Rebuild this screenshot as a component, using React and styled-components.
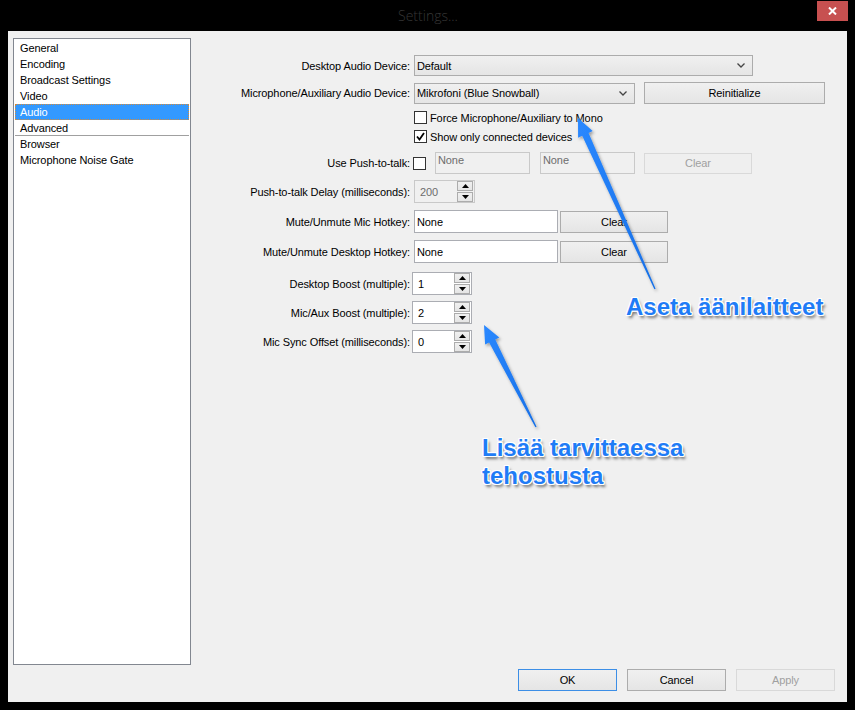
import React from "react";
import styled, { createGlobalStyle } from "styled-components";

const GlobalStyle = createGlobalStyle`
  html, body {
    margin: 0;
    padding: 0;
    background: #000;
  }
  body {
    font-family: "Liberation Sans", Arial, sans-serif;
    font-size: 11px;
    letter-spacing: -0.1px;
    color: #000;
  }
`;

const Window = styled.div`
  position: relative;
  width: 855px;
  height: 710px;
  background: #000;
  display: flex;
  flex-direction: column;
  overflow: hidden;
`;

const TitleBar = styled.div`
  height: 31px;
  flex: none;
  display: grid;
  grid-template-columns: 1fr auto 1fr;
  padding: 0 7px 0 8px;
  box-sizing: border-box;
`;

const Title = styled.div`
  grid-column: 2;
  align-self: center;
  margin-top: -1px;
  font-family: "Open Sans", sans-serif;
  font-weight: 300;
  font-size: 14px;
  letter-spacing: 0;
  color: #363636;
`;

const CloseButton = styled.div`
  justify-self: end;
  width: 31px;
  height: 20px;
  margin-top: 1px;
  background: #c75050;
  display: flex;
  align-items: center;
  justify-content: center;
`;

const Body = styled.div`
  flex: 1;
  margin: 0 8px 8px;
  background: #f0f0f0;
  display: flex;
  flex-direction: column;
`;

const Top = styled.div`
  flex: 1;
  display: flex;
  min-height: 0;
`;

const Sidebar = styled.ul`
  margin: 7px 0 0 5px;
  padding: 1px;
  width: 178px;
  box-sizing: border-box;
  border: 1px solid #828790;
  background: #fff;
  list-style: none;
`;

const Item = styled.li`
  height: 16px;
  line-height: 14px;
  padding-left: 4px;
  box-sizing: border-box;
  border: 1px dotted ${(p) => (p.$active ? "#d48b3c" : "transparent")};
  background: ${(p) => (p.$active ? "#3399ff" : "transparent")};
  color: ${(p) => (p.$active ? "#fff" : "#000")};
  white-space: nowrap;
`;

const Separator = styled.li`
  height: 1px;
  margin-top: -1px;
  background: #a0a0a0;
`;

const Form = styled.div`
  flex: 1;
  display: flex;
  flex-direction: column;
`;

const Row = styled.div`
  display: flex;
  align-items: center;
  height: ${(p) => p.$h}px;
  margin-top: ${(p) => p.$mt}px;
`;

const Label = styled.div`
  width: 219px;
  flex: none;
  text-align: right;
  white-space: nowrap;
`;

const Controls = styled.div`
  display: flex;
  align-items: center;
  margin-left: ${(p) => p.$ml ?? 4}px;
`;

const Combo = styled.div`
  width: ${(p) => p.$w}px;
  height: 21px;
  box-sizing: border-box;
  border: 1px solid #acacac;
  background: linear-gradient(#f0f0f0, #e5e5e5);
  display: flex;
  align-items: center;
  justify-content: space-between;
  padding: 0 7px 0 2px;
`;

const Button = styled.div`
  width: ${(p) => p.$w}px;
  height: ${(p) => p.$h ?? 22}px;
  margin-left: ${(p) => p.$ml ?? 0}px;
  box-sizing: border-box;
  border: 1px solid
    ${(p) => (p.$focus ? "#3c8ee6" : p.$disabled ? "#d9d9d9" : "#acacac")};
  background: ${(p) =>
    p.$disabled ? "#efefef" : "linear-gradient(#f0f0f0, #e5e5e5)"};
  color: ${(p) => (p.$disabled ? "#a0a0a0" : "#000")};
  display: flex;
  align-items: center;
  justify-content: center;
`;

const Box = styled.div`
  width: 13px;
  height: 13px;
  box-sizing: border-box;
  border: 1px solid #333;
  background: #fff;
  display: flex;
  align-items: center;
  justify-content: center;
  flex: none;
`;

const CheckText = styled.span`
  margin-left: 3px;
  white-space: nowrap;
`;

const TextInput = styled.div`
  width: ${(p) => p.$w}px;
  height: ${(p) => p.$h ?? 23}px;
  margin-left: ${(p) => p.$ml ?? 0}px;
  box-sizing: border-box;
  padding: 1px 2px;
  border: 1px solid ${(p) => (p.$disabled ? "#c9c9c9" : "#abadb3")};
  background: ${(p) => (p.$disabled ? "#f0f0f0" : "#fff")};
  color: ${(p) => (p.$disabled ? "#6d6d6d" : "#000")};
  display: flex;
  align-items: ${(p) => (p.$disabled ? "flex-start" : "center")};
`;

const Spin = styled.div`
  width: ${(p) => p.$w}px;
  height: 23px;
  box-sizing: border-box;
  border: 1px solid ${(p) => (p.$disabled ? "#c9c9c9" : "#abadb3")};
  background: ${(p) => (p.$disabled ? "#f0f0f0" : "#fff")};
  color: ${(p) => (p.$disabled ? "#6d6d6d" : "#000")};
  display: flex;
  align-items: center;
  justify-content: space-between;
  padding: 0 0 0 5px;
`;

const SpinButtons = styled.div`
  display: flex;
  flex-direction: column;
  gap: 1px;
  padding: 1px;
`;

const SpinButton = styled.div`
  width: 16px;
  height: 10px;
  box-sizing: border-box;
  border: 1px solid #acacac;
  background: linear-gradient(#f0f0f0, #e5e5e5);
  display: flex;
  align-items: center;
  justify-content: center;
`;

const Footer = styled.div`
  height: 37px;
  flex: none;
  box-sizing: border-box;
  display: flex;
  justify-content: flex-end;
  gap: 10px;
  padding: 4px 12px 0 0;
`;

const Callout = styled.div`
  position: absolute;
  left: ${(p) => p.$x}px;
  top: ${(p) => p.$y}px;
  font-family: "Liberation Sans", Arial, sans-serif;
  font-weight: bold;
  font-size: 24px;
  line-height: 28px;
  letter-spacing: 0;
  color: #1f7cf6;
  white-space: nowrap;
  text-shadow: -1px -1px 0 #fff, 1px -1px 0 #fff, -1px 1px 0 #fff,
    1px 1px 0 #fff, 0 -1px 0 #fff, 0 1px 0 #fff, -1px 0 0 #fff, 1px 0 0 #fff,
    2px 3px 3px rgba(0, 0, 0, 0.55);
`;

const Arrows = styled.svg`
  position: absolute;
  left: 0;
  top: 0;
  pointer-events: none;
`;

const Chevron = () => (
  <svg width="8" height="5" viewBox="0 0 8 5">
    <polyline points="0.5,0.5 4,4 7.5,0.5" fill="none" stroke="#444" strokeWidth="1.3" />
  </svg>
);

const Tri = ({ up }) => (
  <svg width="7" height="4" viewBox="0 0 7 4">
    <polygon points={up ? "0,4 7,4 3.5,0" : "0,0 7,0 3.5,4"} fill="#000" />
  </svg>
);

const Check = ({ checked, text }) => (
  <>
    <Box>
      {checked && (
        <svg width="9" height="9" viewBox="0 0 9 9">
          <polyline points="1,4.5 3.5,7.5 8,1" fill="none" stroke="#000" strokeWidth="1.8" />
        </svg>
      )}
    </Box>
    {text && <CheckText>{text}</CheckText>}
  </>
);

const SpinBox = ({ value, w = 60, disabled }) => (
  <Spin $w={w} $disabled={disabled}>
    <span>{value}</span>
    <SpinButtons>
      <SpinButton>
        <Tri up />
      </SpinButton>
      <SpinButton>
        <Tri />
      </SpinButton>
    </SpinButtons>
  </Spin>
);

const sections = ["General", "Encoding", "Broadcast Settings", "Video", "Audio", "Advanced"];
const plugins = ["Browser", "Microphone Noise Gate"];

export default function App() {
  return (
    <Window>
      <GlobalStyle />
      <TitleBar>
        <Title>Settings...</Title>
        <CloseButton>
          <svg width="9" height="8" viewBox="0 0 9 8">
            <path d="M1 0.5 L8 7.5 M8 0.5 L1 7.5" stroke="#fff" strokeWidth="2" />
          </svg>
        </CloseButton>
      </TitleBar>
      <Body>
        <Top>
          <Sidebar>
            {sections.map((s) => (
              <Item key={s} $active={s === "Audio"}>
                {s}
              </Item>
            ))}
            <Separator />
            {plugins.map((s) => (
              <Item key={s}>{s}</Item>
            ))}
          </Sidebar>
          <Form>
            <Row $h={21} $mt={24}>
              <Label>Desktop Audio Device:</Label>
              <Controls>
                <Combo $w={339}>
                  <span>Default</span>
                  <Chevron />
                </Combo>
              </Controls>
            </Row>
            <Row $h={22} $mt={6}>
              <Label>Microphone/Auxiliary Audio Device:</Label>
              <Controls>
                <Combo $w={221}>
                  <span>Mikrofoni (Blue Snowball)</span>
                  <Chevron />
                </Combo>
                <Button $w={181} $ml={9}>
                  Reinitialize
                </Button>
              </Controls>
            </Row>
            <Row $h={13} $mt={7}>
              <Label />
              <Controls>
                <Check text="Force Microphone/Auxiliary to Mono" />
              </Controls>
            </Row>
            <Row $h={13} $mt={6}>
              <Label />
              <Controls>
                <Check checked text="Show only connected devices" />
              </Controls>
            </Row>
            <Row $h={22} $mt={9}>
              <Label>Use Push-to-talk:</Label>
              <Controls $ml={3}>
                <Check />
                <TextInput $w={95} $h={22} $ml={9} $disabled>
                  None
                </TextInput>
                <TextInput $w={95} $h={22} $ml={10} $disabled>
                  None
                </TextInput>
                <Button $w={108} $h={21} $ml={9} $disabled>
                  Clear
                </Button>
              </Controls>
            </Row>
            <Row $h={23} $mt={6}>
              <Label>Push-to-talk Delay (milliseconds):</Label>
              <Controls>
                <SpinBox value="200" w={61} disabled />
              </Controls>
            </Row>
            <Row $h={23} $mt={7}>
              <Label>Mute/Unmute Mic Hotkey:</Label>
              <Controls>
                <TextInput $w={144}>None</TextInput>
                <Button $w={108} $ml={2}>
                  Clear
                </Button>
              </Controls>
            </Row>
            <Row $h={23} $mt={7}>
              <Label>Mute/Unmute Desktop Hotkey:</Label>
              <Controls>
                <TextInput $w={144}>None</TextInput>
                <Button $w={108} $ml={2}>
                  Clear
                </Button>
              </Controls>
            </Row>
            <Row $h={23} $mt={9}>
              <Label>Desktop Boost (multiple):</Label>
              <Controls $ml={2}>
                <SpinBox value="1" />
              </Controls>
            </Row>
            <Row $h={23} $mt={6}>
              <Label>Mic/Aux Boost (multiple):</Label>
              <Controls $ml={2}>
                <SpinBox value="2" />
              </Controls>
            </Row>
            <Row $h={23} $mt={6}>
              <Label>Mic Sync Offset (milliseconds):</Label>
              <Controls $ml={2}>
                <SpinBox value="0" />
              </Controls>
            </Row>
          </Form>
        </Top>
        <Footer>
          <Button $w={99} $focus>
            OK
          </Button>
          <Button $w={99}>Cancel</Button>
          <Button $w={99} $disabled>
            Apply
          </Button>
        </Footer>
      </Body>

      <Arrows width="855" height="710" viewBox="0 0 855 710">
        <defs>
          <linearGradient id="arrowFill" x1="0" y1="0" x2="1" y2="1">
            <stop offset="0" stopColor="#2a88ff" />
            <stop offset="1" stopColor="#176fe6" />
          </linearGradient>
          <filter id="arrowShadow" x="-20%" y="-20%" width="140%" height="140%">
            <feDropShadow dx="1.5" dy="2" stdDeviation="1.5" floodColor="#000" floodOpacity="0.35" />
          </filter>
        </defs>
        <polygon
          points="578,118 592.7,131.1 588.6,133 655.6,288.7 654.4,289.3 582.2,135.8 578.1,137.7"
          fill="url(#arrowFill)"
          filter="url(#arrowShadow)"
        />
        <polygon
          points="484,325 499.3,337.4 495.3,339.4 536.6,426.7 535.4,427.3 489.1,342.6 485.1,344.6"
          fill="url(#arrowFill)"
          filter="url(#arrowShadow)"
        />
      </Arrows>
      <Callout $x={626} $y={293}>Aseta äänilaitteet</Callout>
      <Callout $x={482} $y={434}>
        Lisää tarvittaessa
        <br />
        tehostusta
      </Callout>
    </Window>
  );
}
